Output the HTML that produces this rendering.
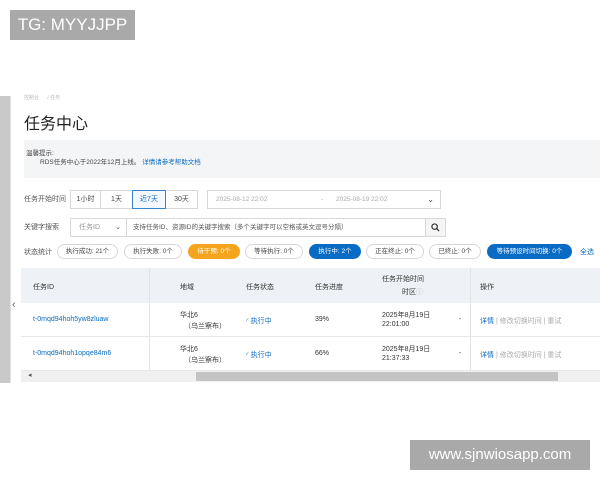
<!DOCTYPE html>
<html><head><meta charset="utf-8"><style>
*{margin:0;padding:0;box-sizing:border-box}
body{width:600px;height:480px;background:#fff;position:relative;overflow:hidden;font-family:"Liberation Sans","Noto Sans CJK SC",sans-serif;color:#333}
.a{position:absolute;white-space:nowrap}
.s{font-size:7px}
.btn{position:absolute;border:1px solid #d8d8d8;background:#fff;font-size:7px;text-align:center;line-height:17px;height:19px;color:#444}
.pill{position:absolute;top:244px;height:15px;border:1px solid #d8d8d8;border-radius:8px;font-size:6.5px;text-align:center;line-height:13px;color:#444;background:#fff}
.blue{background:#0a6bc4;border-color:#0a6bc4;color:#fff}
.org{background:#f5a41e;border-color:#f5a41e;color:#fff}
.lnk{color:#0a6bc4}
</style></head><body>
<div class="a" style="left:10px;top:10px;width:125px;height:30px;background:#a9a9a9;color:#fff;font-size:17px;line-height:30px;text-align:center">TG: MYYJJPP</div>
<div class="a" style="left:0;top:96px;width:10px;height:287px;background:#c9c9c9"></div>
<div class="a" style="left:10px;top:96px;width:1px;height:287px;background:#e0e0e0"></div>
<div class="a s" style="left:24px;top:94px;color:#bbb;font-size:5px">控制台 &nbsp;&nbsp;&nbsp;&nbsp; / 任务</div>
<div class="a" style="left:24px;top:110px;font-size:16px;color:#222">任务中心</div>
<div class="a" style="left:24px;top:140px;width:576px;height:38px;background:#f4f5f7"></div>
<div class="a" style="left:26px;top:147px;font-size:6.5px;color:#444">温馨提示:</div>
<div class="a" style="left:40px;top:156px;font-size:6.5px;color:#444">RDS任务中心于2022年12月上线。 <span class="lnk">详情请参考帮助文档</span></div>
<div class="a s" style="left:24px;top:194px;color:#555">任务开始时间</div>
<div class="btn" style="left:70px;top:190px;width:31px">1小时</div>
<div class="btn" style="left:100px;top:190px;width:33px">1天</div>
<div class="btn" style="left:132px;top:190px;width:34px;border-color:#3a85c9;color:#0a6bc4;background:#f2f8fd;z-index:2">近7天</div>
<div class="btn" style="left:165px;top:190px;width:33px">30天</div>
<div class="btn" style="left:207px;top:190px;width:234px;text-align:left;color:#aaa;font-size:6.5px;padding-left:8px">2025-08-12 22:02<span style="position:absolute;left:113px">-</span><span style="position:absolute;left:128px">2025-08-19 22:02</span><span style="position:absolute;right:6px;color:#444;font-size:8px">&#8964;</span></div>
<div class="a s" style="left:24px;top:222px;color:#555">关键字搜索</div>
<div class="btn" style="left:70px;top:218px;width:57px;text-align:left;padding-left:8px;color:#999">任务ID<span style="position:absolute;right:5px;color:#555">&#8964;</span></div>
<div class="btn" style="left:126px;top:218px;width:300px;text-align:left;padding-left:6px;font-size:6.5px;color:#555">支持任务ID、资源ID的关键字搜索（多个关键字可以空格或英文逗号分隔）</div>
<div class="btn" style="left:425px;top:218px;width:21px;background:#f5f5f5"><svg width="9" height="9" viewBox="0 0 10 10" style="margin-top:4px"><circle cx="4" cy="4" r="3" fill="none" stroke="#333" stroke-width="1.3"/><path d="M6.2 6.2L9 9" stroke="#333" stroke-width="1.4"/></svg></div>
<div class="a s" style="left:24px;top:247px;color:#555">状态统计</div>
<div class="pill" style="left:57px;width:61px">执行成功: 21个</div>
<div class="pill" style="left:124px;width:58px">执行失败: 0个</div>
<div class="pill org" style="left:188px;width:52px">待干预: 0个</div>
<div class="pill" style="left:245px;width:58px">等待执行: 0个</div>
<div class="pill blue" style="left:309px;width:52px">执行中: 2个</div>
<div class="pill" style="left:366px;width:58px">正在终止: 0个</div>
<div class="pill" style="left:429px;width:52px">已终止: 0个</div>
<div class="pill blue" style="left:487px;width:85px">等待预设时间切换: 0个</div>
<div class="a s lnk" style="left:580px;top:247px">全选</div>
<div class="a" style="left:21px;top:268px;width:579px;height:35px;background:#eef2f6"></div>
<div class="a" style="left:149px;top:268px;width:1px;height:103px;background:#e3e3e3"></div>
<div class="a" style="left:470px;top:268px;width:1px;height:103px;background:#e3e3e3"></div>
<div class="a" style="left:21px;top:336px;width:579px;height:1px;background:#e8e8e8"></div>
<div class="a" style="left:21px;top:370px;width:579px;height:1px;background:#e8e8e8"></div>
<div class="a s" style="left:33px;top:282px">任务ID</div>
<div class="a s" style="left:180px;top:282px">地域</div>
<div class="a s" style="left:246px;top:282px">任务状态</div>
<div class="a s" style="left:315px;top:282px">任务进度</div>
<div class="a s" style="left:382px;top:274px">任务开始时间</div>
<div class="a s" style="left:402px;top:287px">时区<span style="color:#bbb">ⓘ</span></div>
<div class="a s" style="left:480px;top:282px">操作</div>
<div class="a" style="left:12px;top:299px;font-size:11px;color:#666">&lsaquo;</div>
<div class="a s lnk" style="left:33px;top:316px">t-0mqd94hoh5yw8zluaw</div>
<div class="a s" style="left:180px;top:310px">华北6</div>
<div class="a s" style="left:184px;top:321px">（乌兰察布）</div>
<div class="a s lnk" style="left:246px;top:316px">◜ 执行中</div>
<div class="a s" style="left:315px;top:316px">39%</div>
<div class="a s" style="left:382px;top:310px">2025年8月19日</div>
<div class="a s" style="left:382px;top:321px">22:01:00</div>
<div class="a s" style="left:459px;top:316px">-</div>
<div class="a s" style="left:480px;top:316px"><span class="lnk">详情</span> <span style="color:#aaa">| 修改切换时间 | 重试</span></div>
<div class="a s lnk" style="left:33px;top:350px">t-0mqd94hoh1opqe84m6</div>
<div class="a s" style="left:180px;top:344px">华北6</div>
<div class="a s" style="left:184px;top:355px">（乌兰察布）</div>
<div class="a s lnk" style="left:246px;top:350px">◜ 执行中</div>
<div class="a s" style="left:315px;top:350px">66%</div>
<div class="a s" style="left:382px;top:344px">2025年8月19日</div>
<div class="a s" style="left:382px;top:355px">21:37:33</div>
<div class="a s" style="left:459px;top:350px">-</div>
<div class="a s" style="left:480px;top:350px"><span class="lnk">详情</span> <span style="color:#aaa">| 修改切换时间 | 重试</span></div>
<div class="a" style="left:21px;top:371px;width:579px;height:11px;background:#f0f0f0"></div>
<div class="a" style="left:196px;top:372px;width:362px;height:9px;background:#c4c4c4"></div>
<div class="a" style="left:28px;top:371px;font-size:7px;color:#555">◂</div>
<div class="a" style="left:410px;top:440px;width:180px;height:30px;background:#a9a9a9;color:#fff;font-size:15px;line-height:30px;text-align:center">www.sjnwiosapp.com</div>
</body></html>
